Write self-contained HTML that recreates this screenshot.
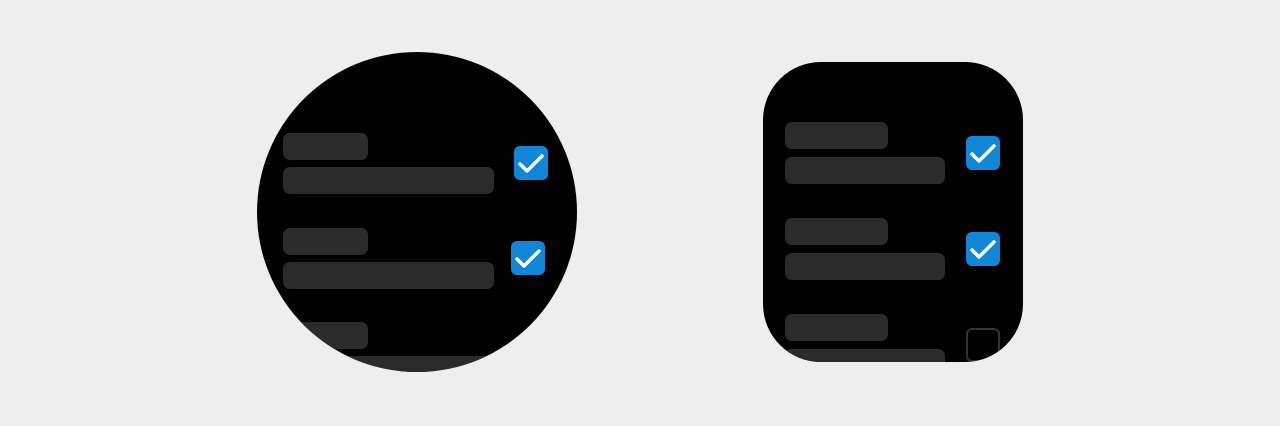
<!DOCTYPE html>
<html><head><style>
body{margin:0;width:1280px;height:426px;background:#eeeeee;position:relative;overflow:hidden}
.s{position:absolute;background:#000;overflow:hidden}
.b{position:absolute;background:#2b2b2b;border-radius:7px;height:27px}
.c{position:absolute;width:34px;height:34px;border-radius:6px;background:#0f86d6}
.c svg{position:absolute;left:0;top:0}
.o{position:absolute;width:30px;height:30px;border:2px solid #333;border-radius:6px}
</style></head><body>
<div class="s" style="left:257px;top:52px;width:320px;height:320px;border-radius:50%">
<div class="b" style="left:26px;top:81px;width:85px"></div>
<div class="b" style="left:26px;top:115px;width:211px"></div>
<div class="b" style="left:26px;top:176px;width:85px"></div>
<div class="b" style="left:26px;top:210px;width:211px"></div>
<div class="b" style="left:26px;top:270px;width:85px"></div>
<div class="b" style="left:26px;top:304px;width:211px"></div>
<div class="c" style="left:257px;top:94px"><svg width="34" height="34"><path d="M6 18 L13 25 L28 10" fill="none" stroke="#fff" stroke-width="3.5" stroke-linecap="round" stroke-linejoin="round"/></svg></div>
<div class="c" style="left:254px;top:189px"><svg width="34" height="34"><path d="M6 18 L13 25 L28 10" fill="none" stroke="#fff" stroke-width="3.5" stroke-linecap="round" stroke-linejoin="round"/></svg></div>
</div>
<div class="s" style="left:763px;top:62px;width:260px;height:300px;border-radius:58px">
<div class="b" style="left:22px;top:60px;width:103px"></div>
<div class="b" style="left:22px;top:95px;width:160px"></div>
<div class="b" style="left:22px;top:156px;width:103px"></div>
<div class="b" style="left:22px;top:191px;width:160px"></div>
<div class="b" style="left:22px;top:252px;width:103px"></div>
<div class="b" style="left:22px;top:287px;width:160px"></div>
<div class="c" style="left:203px;top:74px"><svg width="34" height="34"><path d="M6 18 L13 25 L28 10" fill="none" stroke="#fff" stroke-width="3.5" stroke-linecap="round" stroke-linejoin="round"/></svg></div>
<div class="c" style="left:203px;top:170px"><svg width="34" height="34"><path d="M6 18 L13 25 L28 10" fill="none" stroke="#fff" stroke-width="3.5" stroke-linecap="round" stroke-linejoin="round"/></svg></div>
<div class="o" style="left:203px;top:266px"></div>
</div>
</body></html>
